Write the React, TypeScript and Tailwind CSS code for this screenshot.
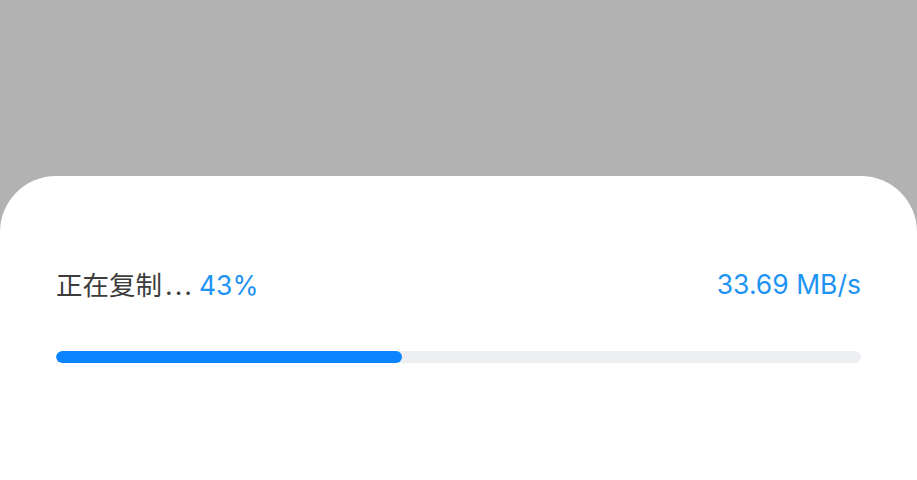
import React from 'react'

const progress = 43

const App: React.FC = () => {
  return (
    <div className="w-[917px] h-[480px] bg-[#b2b2b2] flex flex-col overflow-hidden">
      <div className="h-[176px] shrink-0"></div>
      <div className="flex-1 bg-white rounded-t-[56px] px-[56px] pt-[91px]"
        style={{ fontFamily: 'Inter, "Noto Sans CJK SC", sans-serif' }}>
        <div className="flex justify-between items-center h-[34px] text-[26.5px] leading-[34px]">
          <span className="flex items-baseline">
            <span className="text-[#3c3c3c] font-['Noto_Sans_CJK_SC',sans-serif]">正在复制</span>
            <span className="text-[#3c3c3c] tracking-[2px] ml-[3px]">...</span>
            <span className="text-[#1d93f3] ml-[5px]">{progress}%</span>
          </span>
          <span className="text-[#1d93f3]">33.69 MB/s</span>
        </div>
        <div className="mt-[50px] h-[12px] w-full rounded-full bg-[#eeeff3] overflow-hidden">
          <div className="h-full rounded-full bg-[#0d84ff]" style={{ width: `${progress}%` }}></div>
        </div>
      </div>
    </div>
  )
}

export default App
